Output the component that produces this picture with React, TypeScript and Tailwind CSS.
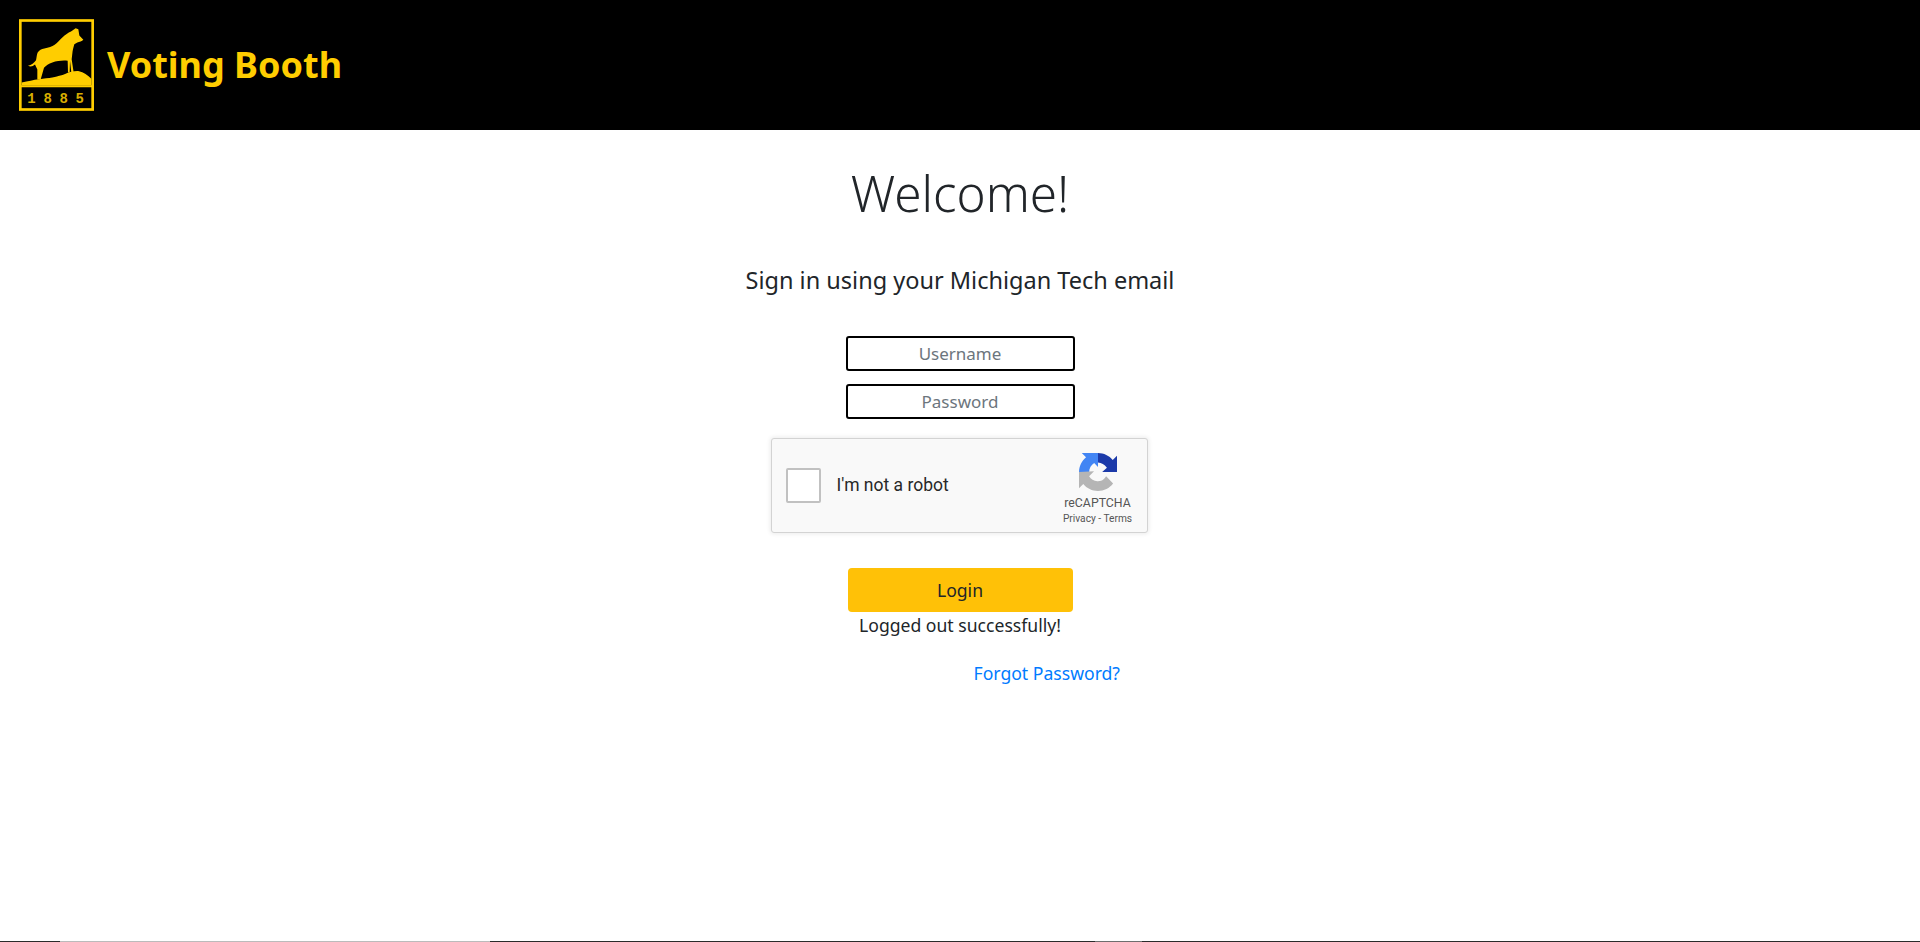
function WolfLogo() {
  return (
    <svg viewBox="57 57 225 275" className="h-[92px] w-[75px] shrink-0">
      <rect x="61" y="61" width="217" height="267" fill="none" stroke="#ffcd00" strokeWidth="8" />
      <path d="M61 258h217" stroke="#ffcd00" strokeWidth="6" />
      <path
        d="M84 197 C94 194 103 188 108 180 C110 172 110 164 113 157 C118 150 124 147 133 145 C146 142 156 140 164 134 C172 128 178 120 187 112 C196 104 204 98 213 94 L227 84 L235 87 L238 106 L250 119 C246 124 238 125 232 127 L223 132 C220 142 218 150 217 160 L215 177 L221 217 L214 217 L210 182 L209 217 L204 216 L203 182 C190 180 172 182 157 187 C146 191 138 196 132 203 L122 238 L112 238 L112 208 L105 193 C98 199 92 200 84 197 Z"
        fill="#ffcd00"
      />
      <path
        d="M65 247 C85 243 100 239 117 237 C132 235 146 234 157 232 C172 229 185 226 197 221 C208 215 224 212 237 213 C250 216 264 224 274 236 L274 256 L65 256 Z"
        fill="#ffcd00"
      />
      <text
        x="82"
        y="308"
        fill="#d9ae00"
        fontFamily="'Liberation Mono', monospace"
        fontWeight="700"
        fontSize="42"
        letterSpacing="23"
      >
        1885
      </text>
    </svg>
  )
}

function RecaptchaLogo() {
  return (
    <svg viewBox="0 0 64 64" className="h-[38px] w-[38px]">
      <path
        d="M64 32V4.69l-7.16 7.16C50.95 4.67 42.03.09 32 .09V16.2C37.8 16.6 43 19.9 47 24.7L39 32Z"
        fill="#1c3aa9"
      />
      <path
        d="M32 0H4.69l7.16 7.16C4.67 13.05.09 21.97.09 32H17.1c0-5.9 3.4-11.7 8.48-15l6.42 6.42Z"
        fill="#4285f4"
      />
      <path
        d="M0 32l.033 1.37v25.9l7.16-7.16c5.86 7.173 14.774 11.754 24.757 11.754 10.4 0 19.622-4.96 25.458-12.64L45.672 39.364a15.55 15.55 0 0 1-4.754 5.334c-2.05 1.6-4.952 2.906-8.968 2.906-.485 0-.86-.057-1.135-.163-5.808-.458-10.842-3.664-13.806-8.316l8.307-8.307Z"
        fill="#b5b5b5"
      />
    </svg>
  )
}

function Recaptcha() {
  return (
    <div className="mt-[19px] mr-[2px] flex h-[95px] w-[377px] items-center rounded-[3px] border border-[#d3d3d3] bg-[#f9f9f9] pl-[14px] pr-[13px] shadow-[0_0_4px_1px_rgba(0,0,0,0.08)] font-['Roboto',sans-serif]">
      <div className="h-[35px] w-[35px] rounded-[2px] border-2 border-[#c1c1c1] bg-white" />
      <span className="ml-[16px] text-[17.5px] text-[#282828]">I'm not a robot</span>
      <div className="ml-auto flex w-[72px] flex-col items-center pt-[7px]">
        <RecaptchaLogo />
        <span className="mt-[5px] text-[12.3px] leading-[15px] text-[#555555]">reCAPTCHA</span>
        <span className="mt-[2px] whitespace-nowrap text-[10.2px] leading-[12px] text-[#555555]">
          Privacy - Terms
        </span>
      </div>
    </div>
  )
}

export default function App() {
  return (
    <div className="flex min-h-screen flex-col bg-white font-['Noto_Sans',sans-serif] text-[#212529]">
      <header className="flex h-[130px] items-center bg-black pl-[19px]">
        <WolfLogo />
        <span className="ml-[13px] text-[36px] font-bold text-[#ffcd00]">Voting Booth</span>
      </header>

      <main className="flex flex-1 flex-col items-center">
        <h1 className="mt-[34px] text-[49.4px] font-light leading-[58px]">Welcome!</h1>
        <p className="mt-[40px] text-[23.5px] leading-[36px]">Sign in using your Michigan Tech email</p>
        <input
          placeholder="Username"
          className="mt-[38px] h-[35px] w-[229px] rounded-[3px] border-2 border-black text-center text-[17px] placeholder:text-[#6c757d]"
        />
        <input
          placeholder="Password"
          className="mt-[13px] h-[35px] w-[229px] rounded-[3px] border-2 border-black text-center text-[17px] placeholder:text-[#6c757d]"
        />
        <Recaptcha />
        <button className="mt-[35px] h-[44px] w-[225px] rounded-[4px] bg-[#ffc107] text-[17.6px] text-[#212529]">
          Login
        </button>
        <p className="text-[17.6px] leading-[27px]">Logged out successfully!</p>
        <a href="#" className="mt-[21px] w-[320px] text-right text-[17.6px] leading-[27px] text-[#007bff]">
          Forgot Password?
        </a>
      </main>

      <div className="flex h-px bg-[#2b2b2b]">
        <div className="ml-[60px] w-[430px] bg-[#bbbbbb]" />
        <div className="ml-[605px] w-[47px] bg-[#6e6e6e]" />
      </div>
    </div>
  )
}
